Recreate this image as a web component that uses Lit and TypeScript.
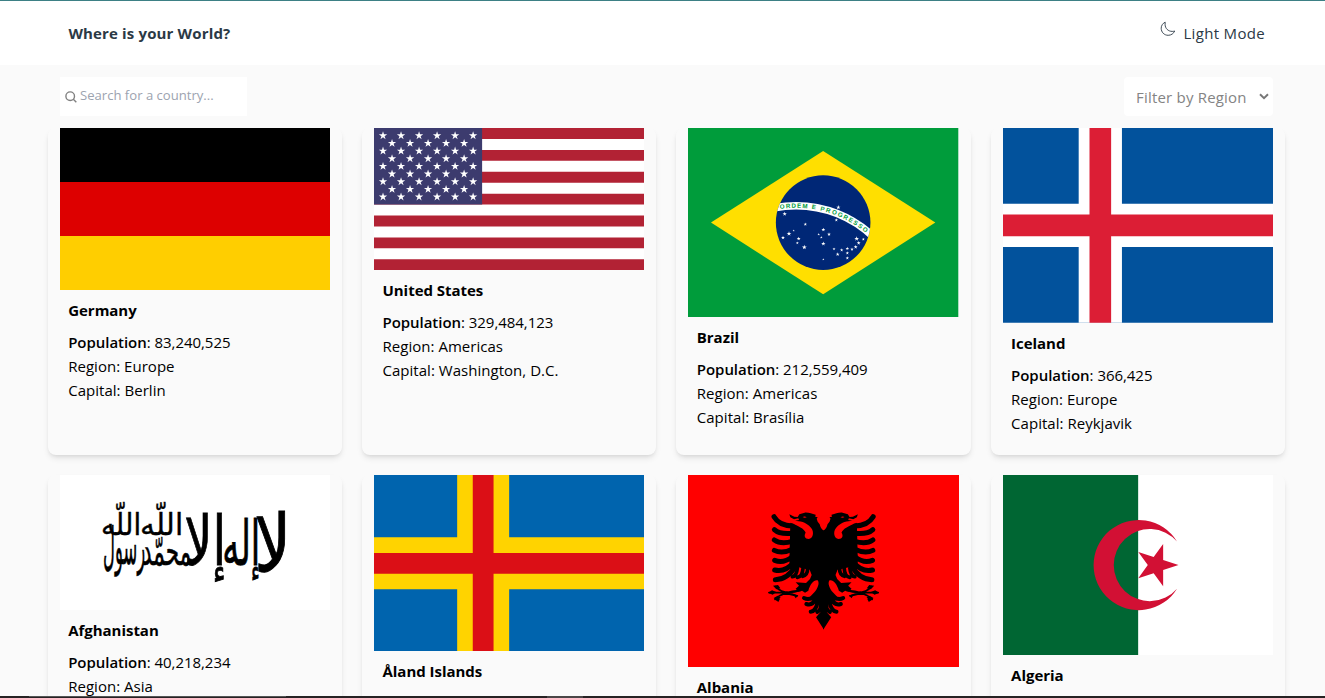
import { LitElement, html, svg, css } from "lit";
import { customElement } from "lit/decorators.js";

const starPoints = (cx: number, cy: number, r: number, start = -90) =>
  Array.from({ length: 10 }, (_, i) => {
    const a = ((start + i * 36) * Math.PI) / 180;
    const k = i % 2 ? r * 0.382 : r;
    return `${(cx + k * Math.cos(a)).toFixed(2)},${(cy + k * Math.sin(a)).toFixed(2)}`;
  }).join(" ");

const germany = svg`<svg viewBox="0 0 5 3" preserveAspectRatio="none"><path d="M0 0h5v3H0z"/><path d="M0 1h5v2H0z" fill="#d00"/><path d="M0 2h5v1H0z" fill="#ffce00"/></svg>`;

const usStars: unknown[] = [];
for (let r = 1; r <= 9; r++)
  for (let c = r % 2 ? 1 : 2; c <= 11; c += 2)
    usStars.push(svg`<polygon fill="#fff" points=${starPoints(c * 247, r * 210, 120)} />`);
const usa = svg`<svg viewBox="0 0 7410 3900" preserveAspectRatio="none"><path d="M0 0h7410v3900H0z" fill="#fff"/><path d="M0 150h7410M0 750h7410M0 1350h7410M0 1950h7410M0 2550h7410M0 3150h7410M0 3750h7410" stroke="#b22234" stroke-width="300"/><path d="M0 0h2964v2100H0z" fill="#3c3b6e"/>${usStars}</svg>`;

const sky = [
  [74, 147, 5], [136, 178, 4], [101, 197, 2.5], [87, 206, 5.5], [69, 218, 4.5], [116, 221, 4.5],
  [112, 234, 3.5], [133, 247, 5.5], [190, 194, 4.5], [176, 208, 3], [184, 217, 3], [207, 208, 4.5],
  [190, 236, 5], [190, 283, 2.5], [235, 127, 5], [229, 165, 4], [222, 252, 3.5], [233, 268, 4.5],
  [245, 255, 4], [262, 251, 4], [262, 264, 4], [262, 279, 4], [276, 253, 4], [287, 246, 4.5],
  [296, 234, 4.5], [290, 221, 5.5], [310, 223, 3.5],
];
const brazil = svg`<svg viewBox="0 0 20 14" preserveAspectRatio="none">
  <defs><clipPath id="globe"><circle cx="10" cy="7" r="3.5"/></clipPath><path id="motto" d="M-.1 14A8.1 8.1 0 0 1 16.1 14"/></defs>
  <path d="M0 0h20v14H0z" fill="#009c3b"/><path d="M1.7 7 10 1.7 18.3 7 10 12.3z" fill="#ffdf00"/>
  <circle cx="10" cy="7" r="3.5" fill="#002776"/>
  <circle cx="8" cy="14" r="8.25" fill="none" stroke="#fff" stroke-width=".56" clip-path="url(#globe)"/>
  <text class="motto"><textPath href="#motto" startOffset="11.4" textLength="6.8">ORDEM E PROGRESSO</textPath></text>
  <g transform="scale(.074) translate(72 37) scale(.3333)" fill="#fff">${sky.map(([x, y, r]) => svg`<polygon points=${starPoints(x, y, r * 1.35)} />`)}</g>
</svg>`;

const iceland = svg`<svg viewBox="0 0 25 18" preserveAspectRatio="none"><path d="M0 0h25v18H0z" fill="#02529c"/><path d="M0 9h25M9 0v18" stroke="#fff" stroke-width="4"/><path d="M0 9h25M9 0v18" stroke="#dc1e35" stroke-width="2"/></svg>`;
const aland = svg`<svg viewBox="0 0 26 17" preserveAspectRatio="none"><path d="M0 0h26v17H0z" fill="#0064ae"/><path d="M0 8.5h26M10.5 0v17" stroke="#ffd300" stroke-width="5"/><path d="M0 8.5h26M10.5 0v17" stroke="#db0f16" stroke-width="2"/></svg>`;

// word, left, baseline, width, vertical stretch, size
const creed: [string, number, number, number, number, number][] = [
  ["لا", 194, 97, 37, 2.85, 28],
  ["إله", 162, 90, 38, 2.2, 28],
  ["إلا", 124, 90, 42, 2.45, 28],
  ["اللّه", 80, 60, 43, 1.12, 27],
  ["محمّد", 82, 90, 49, 1.45, 28],
  ["رسول", 43, 89, 42, 1.75, 29],
  ["اللّه", 41, 60, 40, 1.12, 27],
];
const afghanistan = svg`<svg viewBox="0 0 270 135" preserveAspectRatio="none"><path d="M0 0h270v135H0z" fill="#fff"/>
  ${creed.map(([w, x, y, len, sy, fs]) => svg`<text class="creed" transform="translate(${x} ${y}) scale(1 ${sy})" font-size=${fs} textLength=${len} lengthAdjust="spacingAndGlyphs">${w}</text>`)}
</svg>`;

const eagleHalf = () => svg`
  <path d="M207 107C199 103 196 97 194 88L188 80 185 71 188 66 181 66 182 59C170 57 162 52 149 53L133 58 128 66 118 65 103 58 106 67 117 73 130 70 132 75 120 77 131 79C148 80 162 90 169 100 178 112 174 131 161 132 149 131 146 122 152 113 148 101 130 92 106 83L103 202 112 218 130 217 152 222 164 224 170 240 165 252 153 264 122 262 132 272 122 281 130 290 141 287 150 293 160 287C165 268 177 253 188 256 195 265 187 282 178 292L165 305 176 314 190 328 196 352 183 367 206 403 207 403z"/>
  <g fill="none" stroke="#000" stroke-linecap="round" stroke-linejoin="round" stroke-width="15">
    <path d="M57 65Q72 91 112 93M58 104Q74 119 112 115M58 135Q78 149 112 139M58 166Q80 178 112 163M59 196Q85 207 112 185M59 225Q90 233 116 202M61 254Q98 254 121 214"/>
    <path stroke-width="11" d="M112 245Q125 243 127 219M127 247Q142 245 144 220M143 244Q158 240 158 220"/>
    <path stroke-width="12" d="M147 309Q160 316 180 306M154 327Q173 333 181 312M167 350Q183 349 188 319M187 351Q199 346 199 322"/>
    <path stroke-width="5" d="M62 275Q86 303 137 286M60 313Q83 289 137 286M42 293L84 293 126 303M95 291L126 303"/>
  </g>
  <path d="M54 272l15-2 7 10-12 3zM39 293l12-7 13 5-11 8zM56 309l12-7 9 5-13 10zM61 314l5-6 9 3-5 10zM115 298l15 3-8 9z"/>
  <path d="M143 66q6-3 12 1-7 3-12-1z" fill="#f00"/>`;
const albania = svg`<svg viewBox="0 0 270.25 192.5" preserveAspectRatio="none"><path d="M0 0h271v193H0z" fill="#f00"/>
  <g transform="translate(67 20) scale(.3333)">${eagleHalf()}<g transform="translate(411.5 0) scale(-1 1)">${eagleHalf()}</g></g></svg>`;

const algeria = svg`<svg viewBox="0 0 270 180" preserveAspectRatio="none"><path d="M0 0h270v180H0z" fill="#fff"/><path d="M0 0h135v180H0z" fill="#063"/>
  <path fill="#d21034" d="M173.8 66.4A45 45 0 1 0 173.8 113.6 36 36 0 1 1 173.8 66.4z"/><polygon fill="#d21034" points=${starPoints(153.1, 90, 22.2, 0)} /></svg>`;

interface Country { name: string; flag: unknown; ratio: string; population: string; region: string; capital: string }
const countries: Country[] = [
  { name: "Germany", flag: germany, ratio: "5/3", population: "83,240,525", region: "Europe", capital: "Berlin" },
  { name: "United States", flag: usa, ratio: "19/10", population: "329,484,123", region: "Americas", capital: "Washington, D.C." },
  { name: "Brazil", flag: brazil, ratio: "10/7", population: "212,559,409", region: "Americas", capital: "Brasília" },
  { name: "Iceland", flag: iceland, ratio: "25/18", population: "366,425", region: "Europe", capital: "Reykjavik" },
  { name: "Afghanistan", flag: afghanistan, ratio: "2/1", population: "40,218,234", region: "Asia", capital: "" },
  { name: "Åland Islands", flag: aland, ratio: "26/17", population: "", region: "", capital: "" },
  { name: "Albania", flag: albania, ratio: "1.404", population: "", region: "", capital: "" },
  { name: "Algeria", flag: algeria, ratio: "3/2", population: "", region: "", capital: "" },
];

@customElement("app-root")
export class AppRoot extends LitElement {
  static styles = css`
    :host { display: flex; flex-direction: column; height: 698px; overflow: hidden; box-sizing: border-box; border-top: 1px solid #3d8085; background: #fafafa; color: #000; font: 15px/24px "Open Sans", "Noto Sans", sans-serif; letter-spacing: 0; }
    * { box-sizing: border-box; }
    header { flex: none; height: 64px; background: #fff; display: flex; align-items: center; justify-content: space-between; padding: 0 60px 0 68.4px; color: #2b3945; }
    h1 { margin: 0; font-size: 15px; line-height: 24px; font-weight: 700; letter-spacing: .15px; }
    .mode { display: flex; align-items: center; gap: 7px; letter-spacing: .32px; }
    .mode svg { width: 16px; height: 16px; margin-bottom: 8px; }
    .tools { flex: none; display: flex; justify-content: space-between; padding: 12px 52px 12px 60px; }
    .search { width: 187px; height: 39px; background: #fff; display: flex; align-items: center; gap: 3px; padding: 0 0 3px 5px; color: #9ca3af; font-size: 13.1px; }
    .search svg { width: 12px; height: 12px; margin-top: 3px; }
    .filter { width: 149px; height: 39px; background: #fff; border-radius: 4px; display: flex; align-items: center; justify-content: space-between; padding: 0 4px 0 12px; color: #848484; letter-spacing: .2px; }
    .filter svg { width: 10px; height: 7px; margin-bottom: 1px; }
    .grid { flex: 1; min-height: 0; overflow: hidden; display: grid; grid-template-columns: repeat(4, 1fr); grid-auto-rows: max-content; gap: 20px; padding: 0 40px 0 47.8px; }
    .card { border-radius: 8px; padding: 0 12px; box-shadow: 0 4px 6px -1px rgba(0,0,0,.1), 0 2px 4px -2px rgba(0,0,0,.1); }
    .flag svg { display: block; width: 100%; height: 100%; }
    .info { min-height: 132px; padding: 8px 8.4px 20px; white-space: nowrap; }
    h2 { margin: 0 0 8px; font-size: 15px; line-height: 24px; font-weight: 700; letter-spacing: -.03px; }
    p { margin: 0; letter-spacing: .03px; }
    p:first-of-type { letter-spacing: -.04px; }
    b { font-weight: 600; }
    .motto { font: bold .46px "Liberation Sans", sans-serif; letter-spacing: 0; fill: #009c3b; }
    .creed { font-family: "DejaVu Sans", sans-serif; letter-spacing: 0; direction: ltr; stroke: #000; stroke-width: .35px; }
    .taskbar { flex: none; height: 2px; background: #262223; display: flex; padding-left: 29px; gap: 261px; }
    .taskbar i { height: 1px; width: 257px; background: #555; }
    .taskbar i + i { height: 2px; width: 36px; background: #4a4647; }
  `;

  render() {
    return html`
      <header>
        <h1>Where is your World?</h1>
        <div class="mode">
          <svg viewBox="0 0 16 16" fill="none" stroke="#2b3945" stroke-width=".9" stroke-linejoin="round"><path d="M5.2 1.2C2.8 2.2 1.2 4.6 1.2 7.2c0 4 3 7.1 7 7.1 2.9 0 5.4-1.7 6.5-4.3-.8.3-1.6.4-2.5.4-4 0-7.1-3-7.1-6.9 0-.8 0-1.5.1-2.3z"/></svg>
          <span>Light Mode</span>
        </div>
      </header>
      <div class="tools">
        <div class="search">
          <svg viewBox="0 0 12 12" fill="none" stroke="#808080" stroke-width="1.4"><circle cx="5.2" cy="5.2" r="4.3"/><path d="M8.3 8.3l3 3"/></svg>
          <span>Search for a country...</span>
        </div>
        <div class="filter"><span>Filter by Region</span>
          <svg viewBox="0 0 10 7" fill="none" stroke="#777" stroke-width="2"><path d="M1 1.3l4 3.8 4-3.8"/></svg>
        </div>
      </div>
      <main class="grid">
        ${countries.map((c) => html`<article class="card">
          <div class="flag" style="aspect-ratio:${c.ratio}">${c.flag}</div>
          <div class="info"><h2>${c.name}</h2>
            ${c.population ? html`<p><b>Population</b>: ${c.population}</p>` : ""}
            ${c.region ? html`<p>Region: ${c.region}</p>` : ""}
            ${c.capital ? html`<p>Capital: ${c.capital}</p>` : ""}</div>
        </article>`)}
      </main>
      <div class="taskbar"><i></i><i></i></div>
    `;
  }
}
